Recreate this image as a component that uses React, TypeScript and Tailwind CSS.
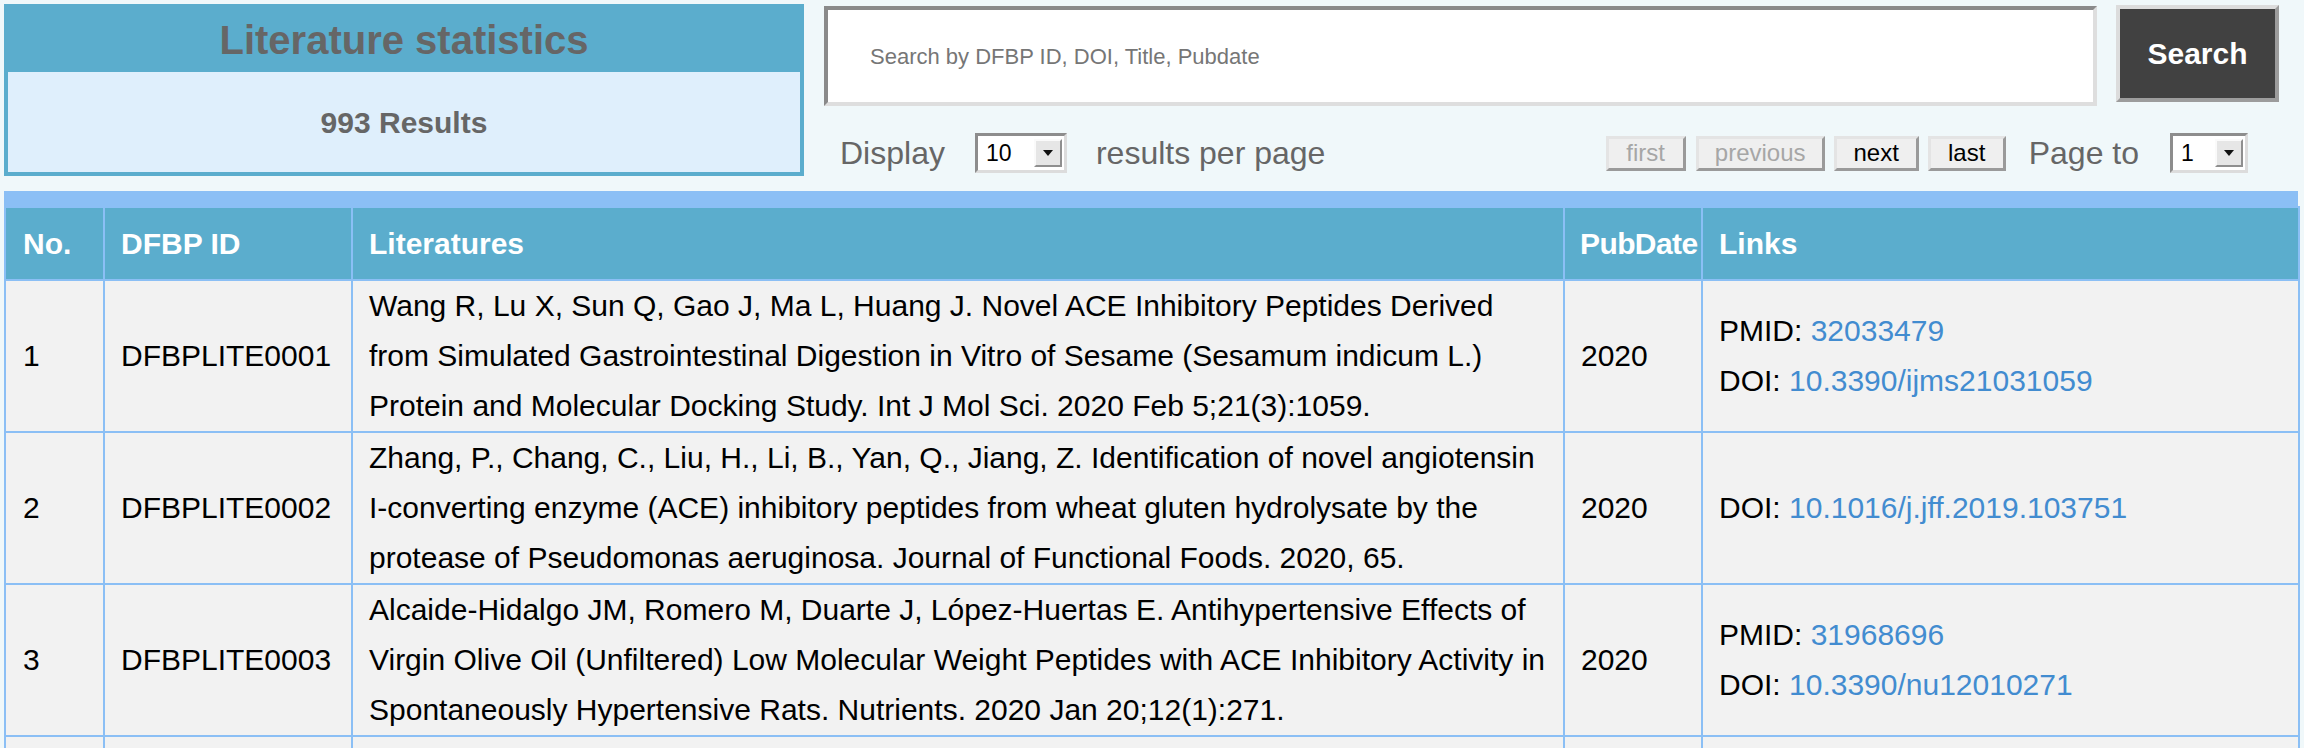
import React from "react";

type Row = {
  no?: number;
  id: string;
  lines: string[];
  year?: string;
  pmid?: string;
  doi?: string;
};

const rows: Row[] = [
  {
    no: 1,
    id: "DFBPLITE0001",
    lines: [
      "Wang R, Lu X, Sun Q, Gao J, Ma L, Huang J. Novel ACE Inhibitory Peptides Derived",
      "from Simulated Gastrointestinal Digestion in Vitro of Sesame (Sesamum indicum L.)",
      "Protein and Molecular Docking Study. Int J Mol Sci. 2020 Feb 5;21(3):1059.",
    ],
    year: "2020",
    pmid: "32033479",
    doi: "10.3390/ijms21031059",
  },
  {
    no: 2,
    id: "DFBPLITE0002",
    lines: [
      "Zhang, P., Chang, C., Liu, H., Li, B., Yan, Q., Jiang, Z. Identification of novel angiotensin",
      "I-converting enzyme (ACE) inhibitory peptides from wheat gluten hydrolysate by the",
      "protease of Pseudomonas aeruginosa. Journal of Functional Foods. 2020, 65.",
    ],
    year: "2020",
    doi: "10.1016/j.jff.2019.103751",
  },
  {
    no: 3,
    id: "DFBPLITE0003",
    lines: [
      "Alcaide-Hidalgo JM, Romero M, Duarte J, López-Huertas E. Antihypertensive Effects of",
      "Virgin Olive Oil (Unfiltered) Low Molecular Weight Peptides with ACE Inhibitory Activity in",
      "Spontaneously Hypertensive Rats. Nutrients. 2020 Jan 20;12(1):271.",
    ],
    year: "2020",
    pmid: "31968696",
    doi: "10.3390/nu12010271",
  },
  // next row is only cut in at the bottom of the view
  {
    id: "row-4",
    lines: ["", "", ""],
  },
];

const FakeSelect = ({ value, width }: { value: string; width: string }) => (
  <div
    className={`flex h-[40px] ${width} items-center border-[3px] border-t-[#8d8d8d] border-l-[#8d8d8d] border-b-[#dcdcdc] border-r-[#dcdcdc] bg-white`}
  >
    <span className="flex-1 pl-[8px] text-[23px] leading-none text-black">{value}</span>
    <span className="mr-[2px] flex h-[28px] w-[28px] items-center justify-center border-2 border-t-[#fafafa] border-l-[#fafafa] border-b-[#8f8f8f] border-r-[#8f8f8f] bg-[#e6e6e6]">
      <svg viewBox="0 0 10 6" className="h-[6px] w-[10px]">
        <path d="M0 0h10L5 6z" fill="#111" />
      </svg>
    </span>
  </div>
);

const PageButton = ({
  label,
  width,
  disabled,
}: {
  label: string;
  width: string;
  disabled?: boolean;
}) => (
  <button
    className={`flex h-[35px] ${width} items-center justify-center border-[3px] border-t-[#e4e4e4] border-l-[#e4e4e4] border-b-[#9a9a9a] border-r-[#9a9a9a] bg-[#efefef] text-[24px] leading-none ${
      disabled ? "text-[#a6a6a6]" : "text-black"
    }`}
  >
    {label}
  </button>
);

export default function App() {
  return (
    <div className="min-h-screen bg-[#f0f8fa] font-['Liberation_Sans',Arial,sans-serif]">
      <div className="flex pl-[4px] pt-[4px]">
        {/* statistics panel */}
        <div className="flex h-[172px] w-[800px] flex-col border-4 border-[#5badcd] bg-[#dfeffc]">
          <div className="flex h-[64px] items-center justify-center bg-[#5badcd] text-[40px] font-bold text-[#666]">
            Literature statistics
          </div>
          <div className="flex flex-1 items-center justify-center text-[30px] font-bold text-[#666]">
            993 Results
          </div>
        </div>

        {/* search + paging */}
        <div className="ml-[20px] w-[1455px]">
          <div className="flex items-start">
            <div className="mt-[2px] flex h-[100px] w-[1273px] items-center border-4 border-t-[#8a8a8a] border-l-[#8a8a8a] border-b-[#dedede] border-r-[#dedede] bg-white pl-[42px]">
              <span className="text-[22px] text-[#767676]">Search by DFBP ID, DOI, Title, Pubdate</span>
            </div>
            <button className="mt-[1px] ml-[19px] flex h-[97px] w-[163px] items-center justify-center border-4 border-t-[#dcdcdc] border-l-[#dcdcdc] border-b-[#9c9c9c] border-r-[#9c9c9c] bg-[#414141] text-[30px] font-bold text-white">
              Search
            </button>
          </div>

          <div className="mt-[27px] flex h-[40px] items-center justify-between pr-[31px]">
            <div className="flex items-center pl-[16px] text-[32px] text-[#666]">
              <span>Display</span>
              <div className="ml-[30px]">
                <FakeSelect value="10" width="w-[92px]" />
              </div>
              <span className="ml-[29px]">results per page</span>
            </div>
            <div className="flex items-center">
              <PageButton label="first" width="w-[80px]" disabled />
              <div className="ml-[10px]">
                <PageButton label="previous" width="w-[129px]" disabled />
              </div>
              <div className="ml-[9px]">
                <PageButton label="next" width="w-[85px]" />
              </div>
              <div className="ml-[9px]">
                <PageButton label="last" width="w-[78px]" />
              </div>
              <span className="ml-[23px] text-[32px] text-[#666]">Page to</span>
              <div className="ml-[31px]">
                <FakeSelect value="1" width="w-[78px]" />
              </div>
            </div>
          </div>
        </div>
      </div>

      {/* literature table */}
      <div className="mt-[15px] ml-[4px] w-[2294px]">
        <div className="h-[15px] bg-[#8bbff5]" />
        <table className="w-[2294px] table-fixed border-collapse text-[30px] leading-[50px]">
          <colgroup>
            <col className="w-[99px]" />
            <col className="w-[248px]" />
            <col className="w-[1212px]" />
            <col className="w-[138px]" />
            <col className="w-[597px]" />
          </colgroup>
          <thead>
            <tr className="h-[73px] bg-[#5badcd] text-left font-bold text-white">
              <th className="border-2 border-[#8bbff5] pl-[17px]">No.</th>
              <th className="border-2 border-[#8bbff5] pl-[16px]">DFBP ID</th>
              <th className="border-2 border-[#8bbff5] pl-[16px]">Literatures</th>
              <th className="border-2 border-[#8bbff5] pl-[15px] tracking-[-0.6px]">PubDate</th>
              <th className="border-2 border-[#8bbff5] pl-[16px]">Links</th>
            </tr>
          </thead>
          <tbody>
            {rows.map((r) => (
              <tr key={r.id} className="bg-[#f2f2f2] align-middle text-black">
                <td className="border-2 border-[#8bbff5] pl-[17px]">{r.no}</td>
                <td className="border-2 border-[#8bbff5] pl-[16px]">{r.no && r.id}</td>
                <td className="border-2 border-[#8bbff5] pl-[16px]">
                  {r.lines.map((l, i) => (
                    <div key={i} className="h-[50px] whitespace-nowrap">
                      {l}
                    </div>
                  ))}
                </td>
                <td className="border-2 border-[#8bbff5] pl-[16px]">{r.year}</td>
                <td className="border-2 border-[#8bbff5] pl-[16px]">
                  {r.pmid && (
                    <div>
                      PMID: <a className="text-[#428cd0]">{r.pmid}</a>
                    </div>
                  )}
                  {r.doi && (
                    <div>
                      DOI: <a className="text-[#428cd0]">{r.doi}</a>
                    </div>
                  )}
                </td>
              </tr>
            ))}
          </tbody>
        </table>
      </div>
    </div>
  );
}
